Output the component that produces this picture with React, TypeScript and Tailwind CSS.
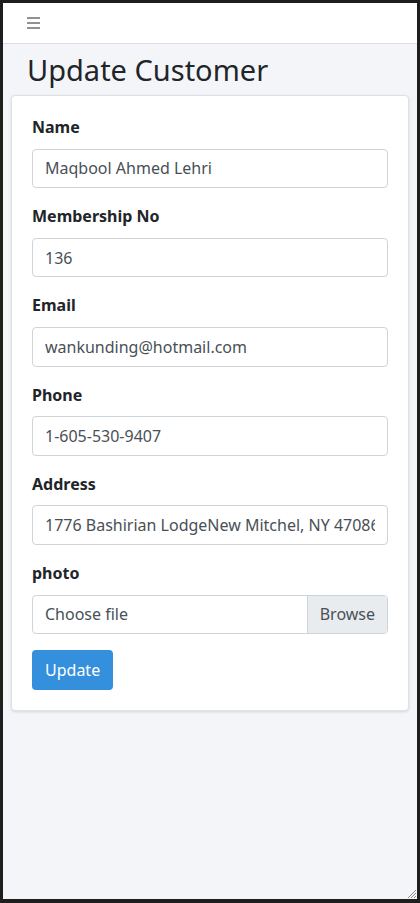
import React, { useState } from 'react';

const fields = [
  { id: 'name', label: 'Name', value: 'Maqbool Ahmed Lehri' },
  { id: 'membership', label: 'Membership No', value: '136' },
  { id: 'email', label: 'Email', value: 'wankunding@hotmail.com' },
  { id: 'phone', label: 'Phone', value: '1-605-530-9407' },
  { id: 'address', label: 'Address', value: '1776 Bashirian LodgeNew Mitchel, NY 47086' },
];

const App = () => {
  const [values, setValues] = useState<Record<string, string>>(
    Object.fromEntries(fields.map((f) => [f.id, f.value]))
  );

  return (
    <div
      className="relative flex h-[903px] flex-col overflow-hidden border-[3px] border-b-4 border-[#1e1e1e] bg-[#f4f5f9] text-[#212529]"
      style={{ fontFamily: '"Noto Sans", "Open Sans", sans-serif' }}
    >
      <nav className="flex h-[41px] shrink-0 items-center border-b border-[#dadde3] bg-white pl-6">
        <svg width="14" height="14" viewBox="0 0 14 14" className="text-[#6c6f73]">
          <path d="M0 2h13M0 7h13M0 12h13" stroke="currentColor" strokeWidth="1.6" />
        </svg>
      </nav>

      <h1 className="mt-[7px] px-6 text-[29px] leading-[37px] font-normal">Update Customer</h1>

      <div className="mx-2 mt-[7px] rounded border border-[#dfe1e5] bg-white p-5 pt-[19px] shadow-[0_1px_3px_rgba(0,0,0,0.12)]">
        <form onSubmit={(e) => e.preventDefault()}>
          {fields.map((f) => (
            <div key={f.id} className="mb-4">
              <label htmlFor={f.id} className="mb-2 block text-[16px] leading-[25.6px] font-bold">
                {f.label}
              </label>
              <input
                id={f.id}
                type="text"
                value={values[f.id]}
                onChange={(e) => setValues({ ...values, [f.id]: e.target.value })}
                className="block h-[39.6px] w-full rounded border border-[#ced4da] bg-white px-3 text-[16px] text-[#495057] outline-none"
              />
            </div>
          ))}

          <div className="mb-4">
            <label className="mb-2 block text-[16px] leading-[25.6px] font-bold">photo</label>
            <div className="flex h-[39.6px] w-full overflow-hidden rounded border border-[#ced4da] text-[16px] text-[#495057]">
              <span className="flex flex-1 items-center px-3">Choose file</span>
              <span className="flex items-center border-l border-[#ced4da] bg-[#e9ecef] px-3">Browse</span>
            </div>
          </div>

          <button
            type="submit"
            className="h-[39.6px] rounded bg-[#3490dc] px-[13px] text-[16px] text-white"
          >
            Update
          </button>
        </form>
      </div>

      <svg width="12" height="12" viewBox="0 0 12 12" className="absolute right-0 bottom-0 text-[#8a8a8a]">
        <path d="M11 3L3 11M11 6L6 11M11 9L9 11" stroke="currentColor" strokeWidth="1" />
      </svg>
    </div>
  );
};

export default App;
